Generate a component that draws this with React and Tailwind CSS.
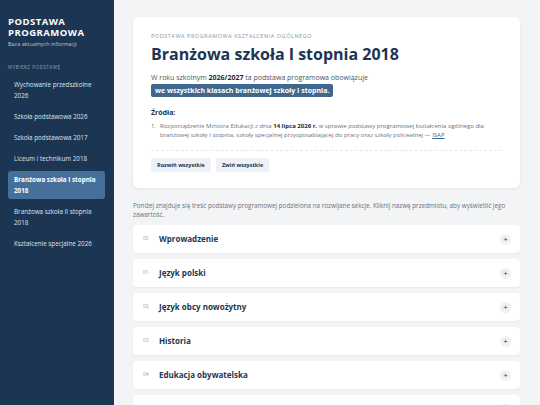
import React from "react";

const nav = [
  "Wychowanie przedszkolne 2026",
  "Szkoła podstawowa 2026",
  "Szkoła podstawowa 2017",
  "Liceum i technikum 2018",
  "Branżowa szkoła I stopnia 2018",
  "Branżowa szkoła II stopnia 2018",
  "Kształcenie specjalne 2026",
];

const sections = [
  ["00", "Wprowadzenie"],
  ["01", "Język polski"],
  ["02", "Język obcy nowożytny"],
  ["03", "Historia"],
  ["04", "Edukacja obywatelska"],
  ["05", "Podstawy przedsiębiorczości"],
];

export default function App() {
  return (
    <div
      className="flex w-[540px] h-[405px] overflow-hidden bg-[#f3f4f6]"
      style={{ fontFamily: '"Open Sans", "Noto Sans", sans-serif' }}
    >
      <aside className="w-[114px] shrink-0 bg-[#1c3553] pl-[8px] pr-[9px] pt-[16px]">
        <div className="text-[9.5px] leading-[11px] font-bold tracking-[0.05em] text-white">
          PODSTAWA
          <br />
          PROGRAMOWA
        </div>
        <div className="mt-[2px] text-[5.5px] leading-[8px] text-[#b9c6d6]">
          Baza aktualnych informacji
        </div>
        <div className="mt-[16px] text-[4.5px] leading-[6px] tracking-[0.12em] text-[#8ea2b9]">
          WYBIERZ PODSTAWĘ
        </div>
        <nav className="mt-[6px] flex flex-col gap-[4px]">
          {nav.map((n, i) => {
            const active = i === 4;
            return (
              <div
                key={n}
                className={
                  "rounded-[3px] px-[6px] py-[3px] text-[6.3px] leading-[11px] " +
                  (active
                    ? "bg-[#46709a] font-bold text-white"
                    : "text-[#dbe3ec]")
                }
              >
                {n}
              </div>
            );
          })}
        </nav>
      </aside>
      <main className="flex-1 pl-[19px] pr-[20px] pt-[17px]">
        <section className="rounded-[6px] bg-white px-[18px] pt-[15px] pb-[16px] shadow-[0_1px_3px_rgba(15,30,60,0.08)]">
          <div className="text-[5.5px] leading-[8px] tracking-[0.1em] text-[#8a949f]">
            PODSTAWA PROGRAMOWA KSZTAŁCENIA OGÓLNEGO
          </div>
          <h1 className="mt-[3px] text-[16px] leading-[22px] font-bold text-[#1c3553]">
            Branżowa szkoła I stopnia 2018
          </h1>
          <p className="mt-[7px] text-[7px] leading-[11px] text-[#4b5563]">
            W roku szkolnym <b className="text-[#1f2937]">2026/2027</b> ta podstawa programowa obowiązuje
          </p>
          <div className="mt-[1px] w-fit rounded-[2px] bg-[#3e6890] px-[4px] text-[7px] leading-[13px] font-bold text-white">
            we wszystkich klasach branżowej szkoły I stopnia.
          </div>
          <div className="mt-[10px] text-[7px] leading-[11px] font-bold text-[#1c3553]">
            Źródła:
          </div>
          <div className="mt-[4px] flex text-[6px] leading-[9px] text-[#6b7280]">
            <span className="w-[9px] shrink-0">1.</span>
            <span>
              Rozporządzenie Ministra Edukacji z dnia{" "}
              <b className="text-[#1f2937]">14 lipca 2026 r.</b> w sprawie podstawy programowej kształcenia ogólnego dla
              branżowej szkoły I stopnia, szkoły specjalnej przysposabiającej do pracy oraz szkoły policealnej —{" "}
              <span className="text-[#3e6890] underline">ISAP</span>
            </span>
          </div>
          <div className="mt-[10px] border-t border-dashed border-[#e5e7eb]" />
          <div className="mt-[7px] flex gap-[5px]">
            <button className="h-[14px] rounded-[3px] bg-[#eef1f5] px-[6px] text-[5.5px] font-bold text-[#1c3553]">
              Rozwiń wszystkie
            </button>
            <button className="h-[14px] rounded-[3px] bg-[#eef1f5] px-[6px] text-[5.5px] font-bold text-[#1c3553]">
              Zwiń wszystkie
            </button>
          </div>
        </section>
        <p className="mt-[13px] text-[6.3px] leading-[9px] text-[#6b7280]">
          Poniżej znajduje się treść podstawy programowej podzielona na rozwijane sekcje. Kliknij nazwę przedmiotu, aby wyświetlić jego zawartość.
        </p>
        <div className="mt-[6px] flex flex-col gap-[6px]">
          {sections.map(([num, title]) => (
            <div
              key={num}
              className="flex h-[28px] shrink-0 items-center rounded-[4px] bg-white pl-[10px] pr-[9px] shadow-[0_1px_2px_rgba(15,30,60,0.05)]"
            >
              <span className="w-[16px] text-[5px] text-[#9ca3af]">{num}</span>
              <span className="flex-1 text-[8px] font-bold text-[#1c3553]">{title}</span>
              <span className="flex h-[11px] w-[11px] items-center justify-center rounded-full bg-[#eef1f5] text-[8px] leading-none text-[#374151]">
                +
              </span>
            </div>
          ))}
        </div>
      </main>
    </div>
  );
}
